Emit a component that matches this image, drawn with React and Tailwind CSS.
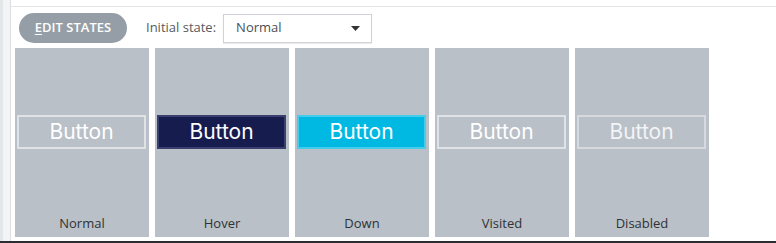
import React from 'react'

const states = [
  { label: 'Normal', btn: 'border-[#dfe2e6] bg-transparent text-white' },
  { label: 'Hover', btn: 'border-[#394070] bg-[#171c4f] text-white' },
  { label: 'Down', btn: 'border-[#45cbec] bg-[#00b9e3] text-white' },
  { label: 'Visited', btn: 'border-[#dfe2e6] bg-transparent text-white' },
  { label: 'Disabled', btn: 'border-[#d6dade] bg-transparent text-[#f3f4f6]' },
]

const StatePanel = ({ state }) => (
  <div className="flex h-[189px] w-[134px] flex-col bg-[#b9c0c7] pt-[67px] pb-[5px]">
    <div
      className={`ml-[2px] mr-[3px] flex h-[34px] items-center justify-center border-2 font-['Inter',sans-serif] text-[21px] font-normal ${state.btn}`}
    >
      Button
    </div>
    <div className="flex-1" />
    <div className="text-center text-[13px] leading-[18px] text-[#2f3236]">{state.label}</div>
  </div>
)

export default function App() {
  return (
    <div className="flex h-[243px] w-[776px] flex-col overflow-hidden bg-white font-['Open_Sans',sans-serif]">
      <div className="flex flex-1">
        {/* Side strip */}
        <div className="w-[3px] bg-[#e3e7ea]" />
        <div className="w-[7px] bg-[#f3f4f6]" />
        <div className="w-px bg-[#dce0e4]" />

        <div className="flex flex-1 flex-col">
          <div className="h-[6px]" />
          <div className="h-px bg-[#e1e5e8]" />

          {/* Toolbar */}
          <div className="mt-[6px] mb-[5px] flex h-[30px] items-center pl-[8px]">
            <button className="flex h-[30px] w-[108px] items-center justify-center rounded-full bg-[#959ea6] text-[13px] font-semibold text-white">
              <span className="underline underline-offset-2">E</span>DIT STATES
            </button>
            <span className="ml-[19px] text-[13px] text-[#555b61]">Initial state:</span>
            <div className="ml-[7px] flex h-[29px] w-[149px] items-center justify-between border border-[#cfd3d7] pl-[12px] pr-[11px] text-[13px] text-[#4a4f55] shadow-[0_1px_1px_rgba(0,0,0,0.08)]">
              <span>Normal</span>
              <svg width="9" height="5" viewBox="0 0 9 5">
                <path d="M0 0h9L4.5 5z" fill="#333" />
              </svg>
            </div>
          </div>

          {/* State panels */}
          <div className="flex gap-[6px] pl-[4px]">
            {states.map((s) => (
              <StatePanel key={s.label} state={s} />
            ))}
          </div>
        </div>
      </div>
      <div className="h-[2px] bg-[#2c2d32]" />
    </div>
  )
}
